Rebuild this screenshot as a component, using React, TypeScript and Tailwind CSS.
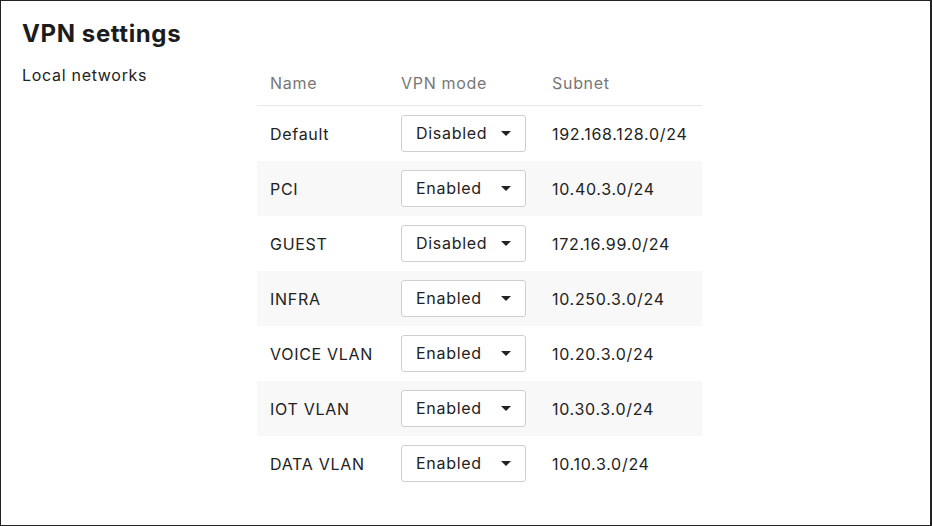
const networks = [
  { name: 'Default', mode: 'Disabled', subnet: '192.168.128.0/24' },
  { name: 'PCI', mode: 'Enabled', subnet: '10.40.3.0/24' },
  { name: 'GUEST', mode: 'Disabled', subnet: '172.16.99.0/24' },
  { name: 'INFRA', mode: 'Enabled', subnet: '10.250.3.0/24' },
  { name: 'VOICE VLAN', mode: 'Enabled', subnet: '10.20.3.0/24' },
  { name: 'IOT VLAN', mode: 'Enabled', subnet: '10.30.3.0/24' },
  { name: 'DATA VLAN', mode: 'Enabled', subnet: '10.10.3.0/24' },
];

function ModeSelect({ value }: { value: string }) {
  return (
    <div className="flex h-[37px] w-[125px] items-center justify-between rounded-[3px] border border-[#cfcfcf] bg-white pl-[14px] pr-[14px] text-[#222]">
      <span className="-mt-[1px]">{value}</span>
      <svg width="10" height="5" viewBox="0 0 10 5" className="mb-[1px]">
        <path d="M0 0h10L5 5z" fill="#222" />
      </svg>
    </div>
  );
}

export default function App() {
  return (
    <div
      className="h-[526px] w-[932px] border border-r-2 border-[#222] bg-white text-[16px] tracking-[0.7px] text-[#222]"
      style={{ fontFamily: 'Inter, "Noto Sans", sans-serif' }}
    >
      <div className="px-[21px] pt-[17px]">
        <h1 className="text-[24px] font-bold leading-[32px] tracking-[0.6px] text-[#1c1c1c]">VPN settings</h1>
        <div className="mt-[14px] flex">
          <div className="w-[235px] pt-[1px] leading-[20px]">Local networks</div>
          <div className="w-[445px]">
            <div className="flex h-[42px] items-end border-b border-[#e8e8e8] pb-[10px] text-[#777]">
              <div className="w-[144px] pl-[13px]">Name</div>
              <div className="w-[151px]">VPN mode</div>
              <div>Subnet</div>
            </div>
            {networks.map((n, i) => (
              <div
                key={n.name}
                className={`flex h-[55px] items-center ${i % 2 === 1 ? 'bg-[#f8f8f8]' : 'bg-white'}`}
              >
                <div className="w-[144px] pl-[13px]">{n.name}</div>
                <div className="w-[151px]">
                  <ModeSelect value={n.mode} />
                </div>
                <div>{n.subnet}</div>
              </div>
            ))}
          </div>
        </div>
      </div>
    </div>
  );
}
